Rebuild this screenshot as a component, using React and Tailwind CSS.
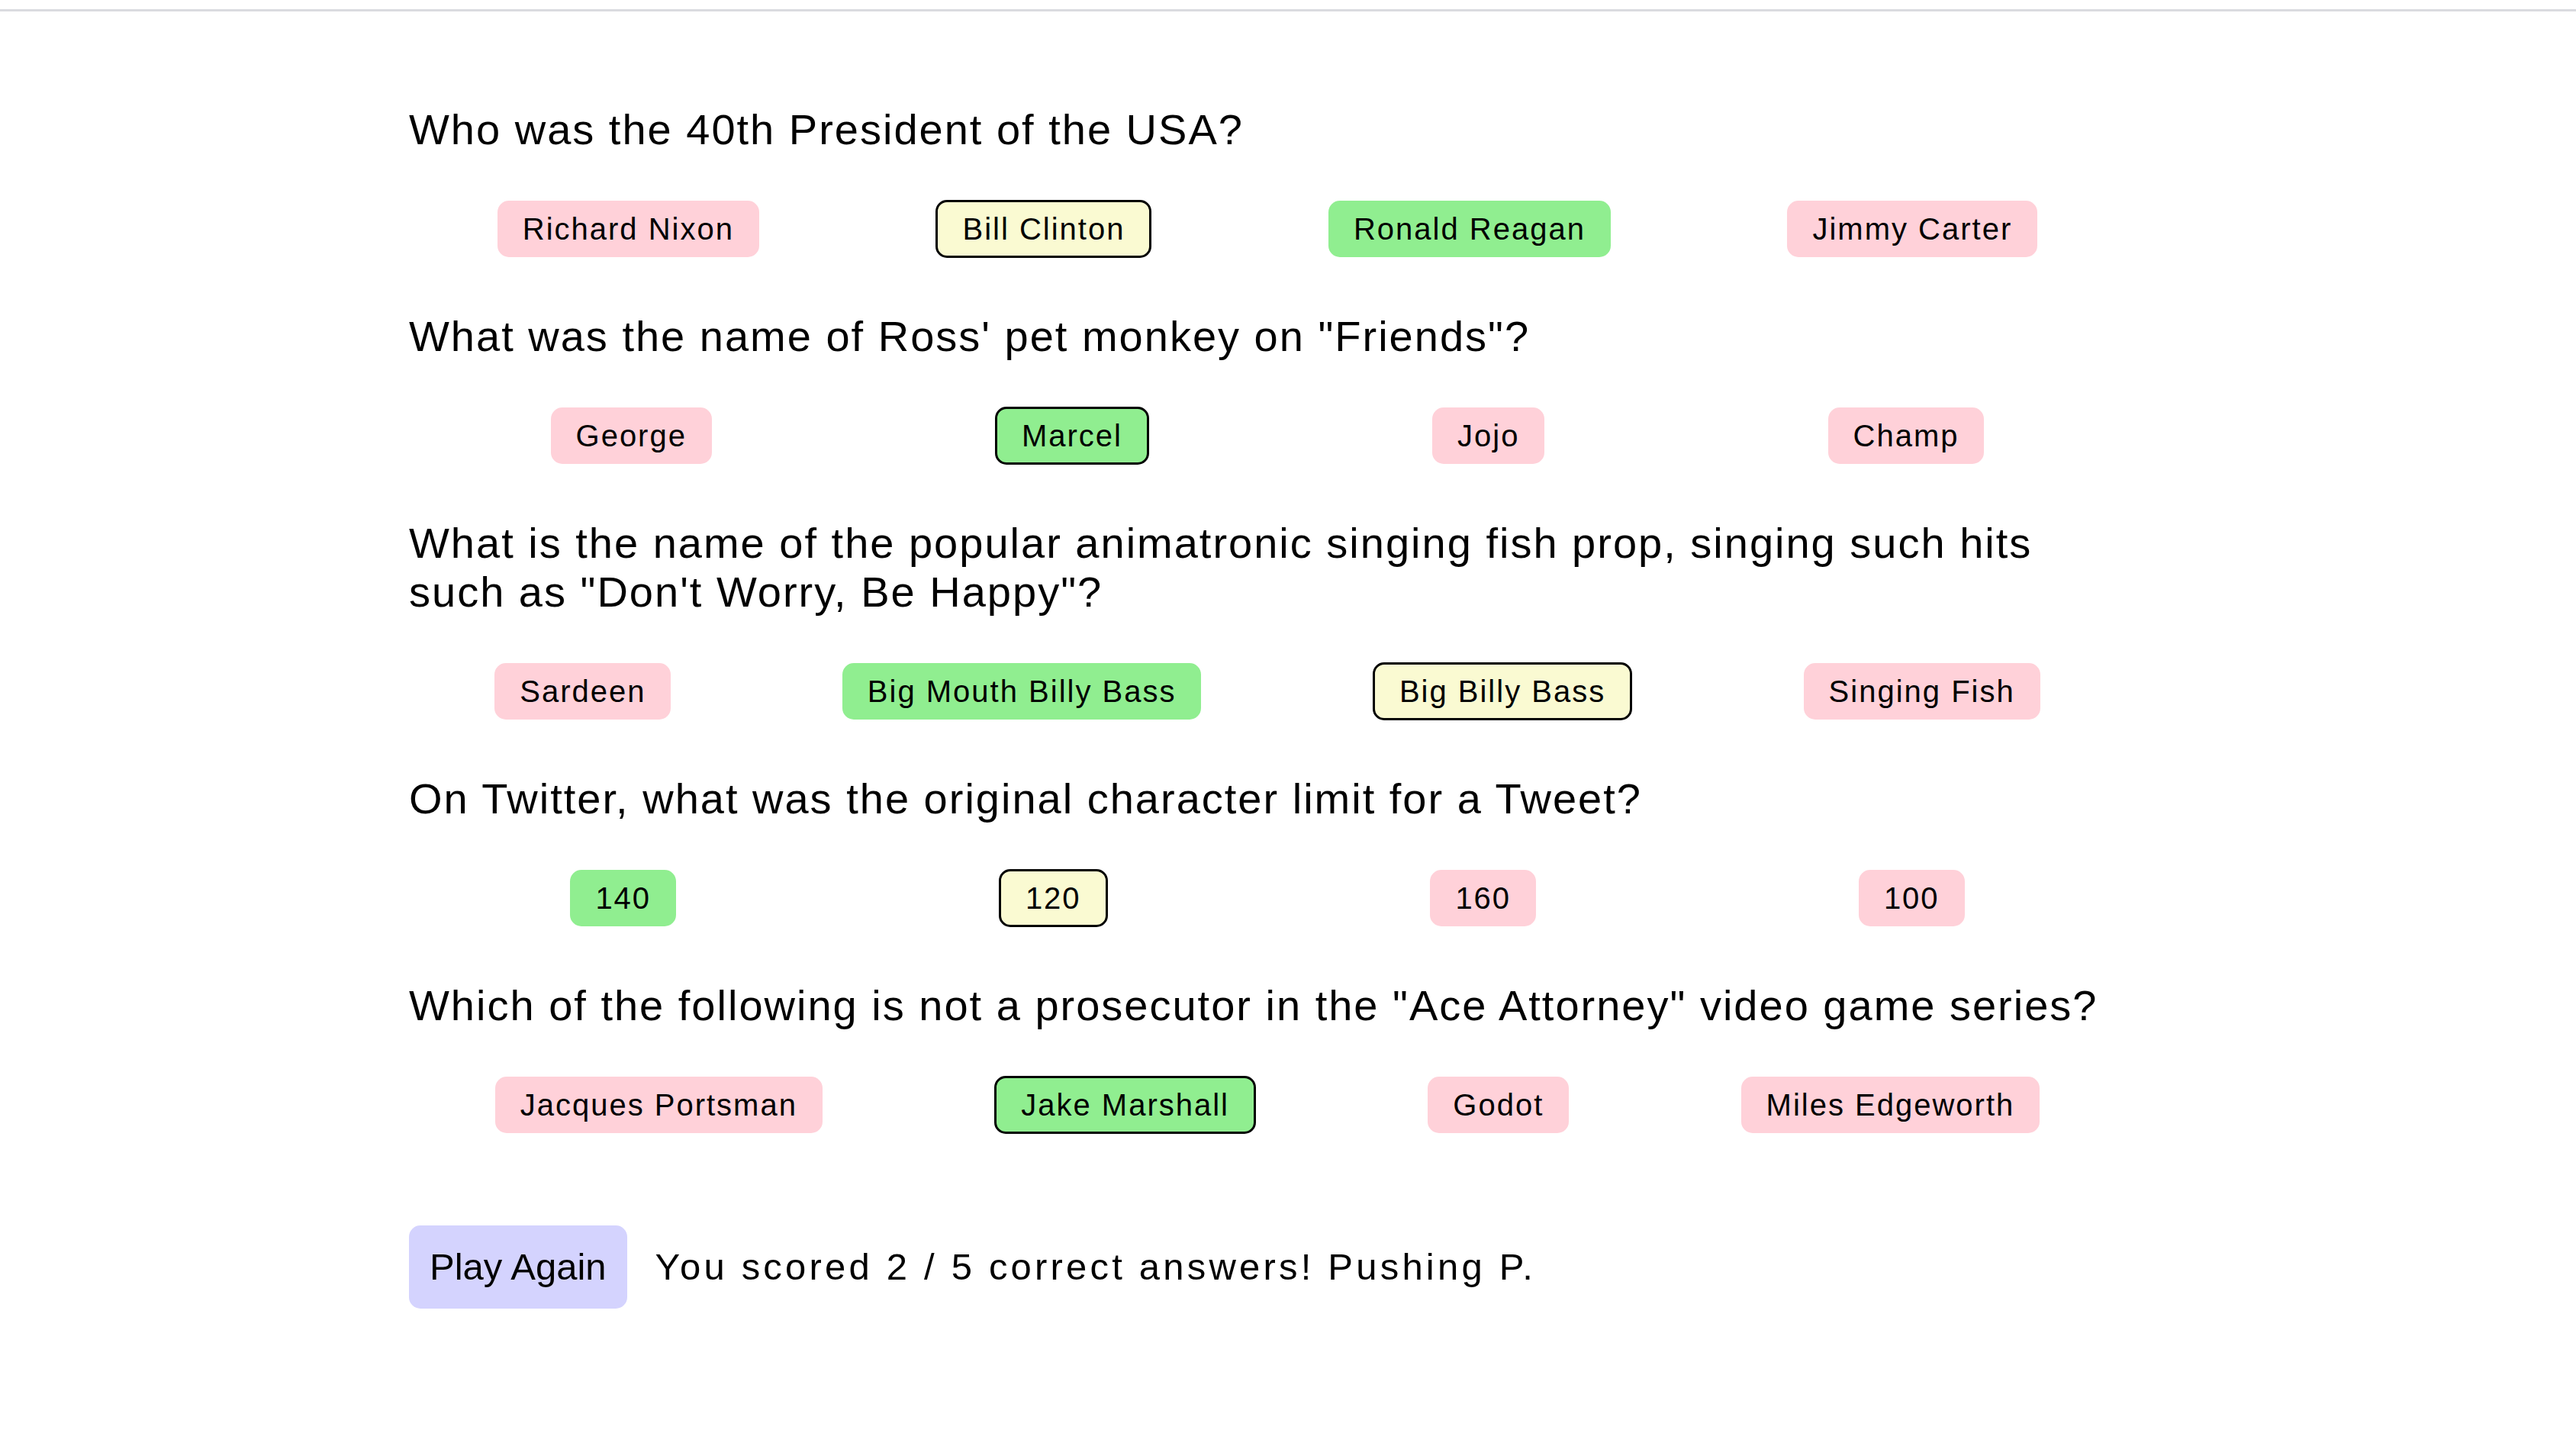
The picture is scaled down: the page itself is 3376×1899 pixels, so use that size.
import React from "react";

const PINK = "bg-[#ffd1d9]";
const GREEN = "bg-[#90ee90]";
const YELLOW = "bg-[#fafad2]";

const questions = [
  {
    q: "Who was the 40th President of the USA?",
    a: [
      { t: "Richard Nixon", c: "wrong" },
      { t: "Bill Clinton", c: "picked" },
      { t: "Ronald Reagan", c: "correct" },
      { t: "Jimmy Carter", c: "wrong" },
    ],
  },
  {
    q: 'What was the name of Ross\' pet monkey on "Friends"?',
    a: [
      { t: "George", c: "wrong" },
      { t: "Marcel", c: "correctPicked" },
      { t: "Jojo", c: "wrong" },
      { t: "Champ", c: "wrong" },
    ],
  },
  {
    q: 'What is the name of the popular animatronic singing fish prop, singing such hits such as "Don\'t Worry, Be Happy"?',
    a: [
      { t: "Sardeen", c: "wrong" },
      { t: "Big Mouth Billy Bass", c: "correct" },
      { t: "Big Billy Bass", c: "picked" },
      { t: "Singing Fish", c: "wrong" },
    ],
  },
  {
    q: "On Twitter, what was the original character limit for a Tweet?",
    a: [
      { t: "140", c: "correct" },
      { t: "120", c: "picked" },
      { t: "160", c: "wrong" },
      { t: "100", c: "wrong" },
    ],
  },
  {
    q: 'Which of the following is not a prosecutor in the "Ace Attorney" video game series?',
    a: [
      { t: "Jacques Portsman", c: "wrong" },
      { t: "Jake Marshall", c: "correctPicked" },
      { t: "Godot", c: "wrong" },
      { t: "Miles Edgeworth", c: "wrong" },
    ],
  },
];

function Answer({ t, c }) {
  let cls = "";
  if (c === "wrong") cls = `${PINK} px-[33px] py-[14px]`;
  else if (c === "correct") cls = `${GREEN} px-[33px] py-[14px]`;
  else if (c === "picked")
    cls = `${YELLOW} border-[3px] border-black px-[32px] py-[12px]`;
  else cls = `${GREEN} border-[3px] border-black px-[32px] py-[12px]`;
  return (
    <div
      className={`${cls} rounded-[15px] text-[40px] leading-[46px] tracking-[2px] text-black whitespace-nowrap`}
    >
      {t}
    </div>
  );
}

export default function App() {
  return (
    <div
      className="min-h-screen bg-white text-black"
      style={{ fontFamily: '"Liberation Sans", Arial, sans-serif' }}
    >
      <div className="pt-[12px]">
        <div className="h-[3px] bg-[#dadbdf]" />
      </div>
      <div className="ml-[536px] w-[2250px] pt-[123px]">
        {questions.map((item, i) => (
          <div key={i} className="mb-[71px]">
            <div className="text-[56px] leading-[64px] tracking-[2px]">
              {item.q}
            </div>
            <div className="mt-[59px] flex h-[77px] items-center justify-around">
              {item.a.map((a, j) => (
                <Answer key={j} {...a} />
              ))}
            </div>
          </div>
        ))}
        <div className="mt-[120px] flex items-center">
          <button className="rounded-[15px] bg-[#d4d3fe] px-[27px] py-[26px] text-[49px] leading-[57px] text-black">
            Play Again
          </button>
          <div className="ml-[37px] text-[49px] leading-[57px] tracking-[4.2px]">
            You scored 2 / 5 correct answers! Pushing P.
          </div>
        </div>
      </div>
    </div>
  );
}
